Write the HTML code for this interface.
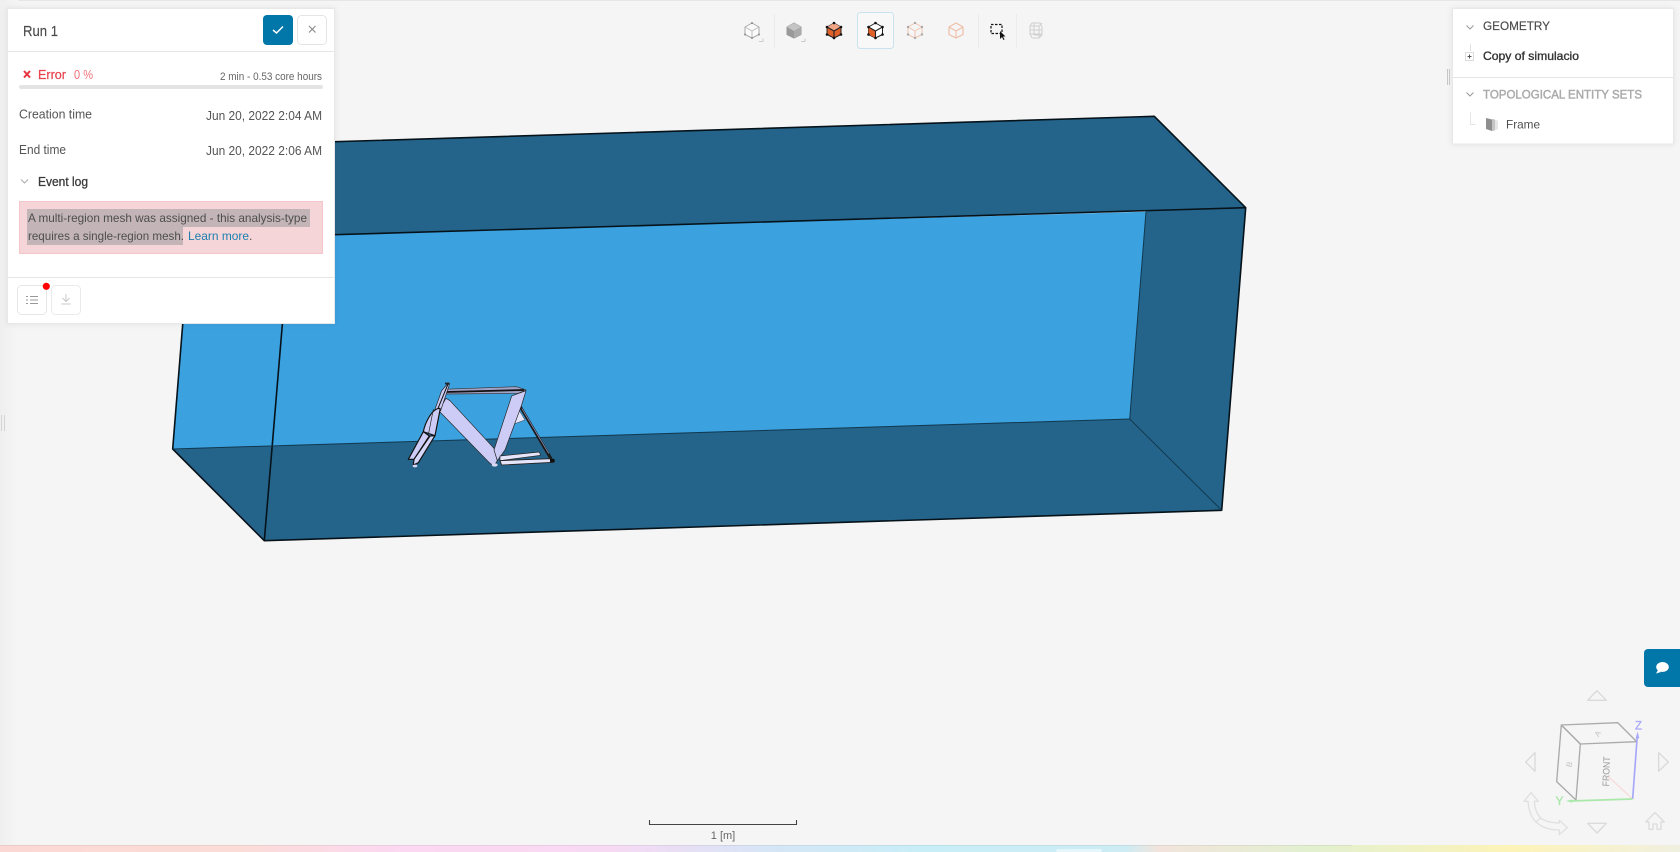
<!DOCTYPE html>
<html>
<head>
<meta charset="utf-8">
<title>Run 1</title>
<style>
html,body{margin:0;padding:0;width:1680px;height:852px;overflow:hidden;background:#f5f5f5;}
svg{display:block;position:absolute;left:0;top:0;}
text{font-family:"Liberation Sans",sans-serif;white-space:pre;}
</style>
</head>
<body>
<svg width="1680" height="852" viewBox="0 0 1680 852" xmlns="http://www.w3.org/2000/svg">
<defs>
<linearGradient id="rb" x1="0" x2="1" y1="0" y2="0">
<stop offset="0" stop-color="#fcd8d4"/>
<stop offset=".14" stop-color="#fbdcd6"/>
<stop offset=".24" stop-color="#fcd8f2"/>
<stop offset=".36" stop-color="#f8d9f3"/>
<stop offset=".46" stop-color="#d5e6f6"/>
<stop offset=".55" stop-color="#c8eef8"/>
<stop offset=".67" stop-color="#cdecf4"/>
<stop offset=".69" stop-color="#f2e4dc"/>
<stop offset=".78" stop-color="#e2f0d0"/>
<stop offset=".9" stop-color="#fdf3b8"/>
<stop offset="1" stop-color="#f0f0e0"/>
</linearGradient>
<linearGradient id="ls" x1="0" x2="1" y1="0" y2="0">
<stop offset="0" stop-color="#efefef"/>
<stop offset="1" stop-color="#f5f5f5"/>
</linearGradient>
<filter id="sh" x="-5%" y="-5%" width="110%" height="110%">
<feDropShadow dx="0" dy="0" stdDeviation="3" flood-color="#000" flood-opacity=".08"/>
</filter>
</defs>

<rect width="1680" height="852" fill="#f5f5f5"/>
<rect width="1680" height="1" fill="#e6e6e6"/>
<rect x="0" y="0" width="18" height="845" fill="url(#ls)"/>

<!-- 3D box -->
<g stroke-linejoin="round">
<polygon points="197,146 1154.3,116.3 1245.7,207.7 289.7,236" fill="#25648a"/>
<polygon points="197,146 289.7,236 264.3,540.7 172.7,449" fill="#3ca1df"/>
<polygon points="280,236 1146,211.7 1129.7,419 172.7,449 197,238" fill="#3ca1df"/>
<polygon points="1245.7,207.7 1221.7,510.3 1129.7,419 1146,211" fill="#25648a"/>
<polygon points="172.7,449 1129.7,419 1221.7,510.3 264.3,540.7" fill="#25648a"/>
<g fill="none" stroke="#06121a" stroke-width="1.600">
<polygon points="197,146 1154.3,116.3 1245.7,207.7 1221.7,510.3 264.3,540.7 172.7,449"/>
<line x1="1245.7" y1="207.7" x2="289.7" y2="236"/>
<line x1="289.7" y1="236" x2="264.3" y2="540.7"/>
</g>
<g fill="none" stroke="#10384f" stroke-width="1">
<line x1="1146" y1="211.7" x2="1129.7" y2="419"/>
<line x1="1129.7" y1="419" x2="172.7" y2="449"/>
<line x1="1129.7" y1="419" x2="1221.7" y2="510.3"/>
</g>
</g>

<!-- Bike frame -->
<g transform="translate(390 370) scale(.3333)" stroke-linejoin="round" stroke-linecap="round">
<polygon points="158,58 380,50 408,60 385,70 165,72" fill="#a2a2c8" stroke="#333" stroke-width="2"/>
<line x1="168" y1="66" x2="400" y2="60" stroke="#111" stroke-width="5"/>
<polygon points="388,122 405,150 372,162" fill="#e4e4fb" stroke="#333" stroke-width="1.500"/>
<line x1="392" y1="112" x2="487" y2="273" stroke="#1a1a1a" stroke-width="9"/>
<line x1="396" y1="116" x2="476" y2="250" stroke="#9a9ac4" stroke-width="2"/>
<polygon points="168,85 180,92 312,235 322,272 312,288 300,280 146,122" fill="#ccccf6" stroke="#222" stroke-width="2"/>
<polygon points="365,78 408,62 395,105 345,240 322,272 312,240" fill="#ccccf6" stroke="#222" stroke-width="2"/>
<polygon points="330,258 448,246 452,256 330,272" fill="#e4e4fb" stroke="#222" stroke-width="2"/>
<polygon points="330,272 480,266 490,277 335,285" fill="#e4e4fb" stroke="#222" stroke-width="2.500"/>
<polygon points="155,62 172,42 178,44 152,122 135,118" fill="#ccccf6" stroke="#222" stroke-width="2"/>
<line x1="174" y1="42" x2="140" y2="125" stroke="#111" stroke-width="3"/>
<path d="M150 115C125 115 105 160 100 185L135 197L150 120Z" fill="#ccccf6" stroke="#111" stroke-width="3.500"/>
<line x1="130" y1="118" x2="115" y2="195" stroke="#222" stroke-width="2"/>
<polygon points="100,185 118,198 72,268 55,268" fill="#ccccf6" stroke="#111" stroke-width="3.500"/>
<polygon points="120,198 135,197 85,278 70,285 72,268" fill="#d6d6f8" stroke="#111" stroke-width="3.500"/>
<ellipse cx="314" cy="285" rx="9" ry="5" fill="#d8d8f0"/>
<ellipse cx="75" cy="288" rx="7" ry="4" fill="#d8d8f0"/>
<rect x="165" y="38" width="14" height="5" fill="#222"/>
<rect x="480" y="267" width="14" height="10" fill="#111"/>
</g>

<!-- Left panel -->
<g filter="url(#sh)"><rect x="7.500" y="8.500" width="327" height="315" fill="#fff" stroke="#e8e8e8" stroke-width="1"/></g>
<text x="23" y="36" font-size="15" fill="#4a4a4a" stroke="#4a4a4a" stroke-width=".15" textLength="35" lengthAdjust="spacingAndGlyphs">Run 1</text>
<rect x="263" y="15" width="30" height="30" rx="4" fill="#0077a8"/>
<path d="M273 30l3.500 3 6.500-6.500" fill="none" stroke="#fff" stroke-width="1.500"/>
<rect x="297.500" y="15.500" width="29" height="29" rx="4" fill="#fff" stroke="#e4e4e4"/>
<path d="M309 26l6.500 6.500M315.500 26l-6.500 6.500" stroke="#888" stroke-width="1.100"/>
<rect x="8" y="51" width="326" height="1" fill="#e6e6e6"/>

<path d="M24 71l6 6.500M30 71l-6 6.500" stroke="#e8323e" stroke-width="2"/>
<text x="38" y="79" font-size="12.500" fill="#e8424d" stroke="#e8424d" stroke-width=".2" textLength="28" lengthAdjust="spacingAndGlyphs">Error</text>
<text x="74" y="79" font-size="12.500" fill="#f0707a" textLength="19" lengthAdjust="spacingAndGlyphs">0 %</text>
<text x="220" y="80" font-size="11" fill="#666" textLength="102" lengthAdjust="spacingAndGlyphs">2 min - 0.53 core hours</text>
<rect x="19" y="85" width="304" height="4" rx="2" fill="#e4e4e4"/>

<text x="19" y="118.500" font-size="12.500" fill="#555" textLength="73" lengthAdjust="spacingAndGlyphs">Creation time</text>
<text x="206" y="120" font-size="12.500" fill="#555" textLength="116" lengthAdjust="spacingAndGlyphs">Jun 20, 2022 2:04 AM</text>
<text x="19" y="154" font-size="12.500" fill="#555" textLength="47" lengthAdjust="spacingAndGlyphs">End time</text>
<text x="206" y="155" font-size="12.500" fill="#555" textLength="116" lengthAdjust="spacingAndGlyphs">Jun 20, 2022 2:06 AM</text>

<path d="M21 179.500l3.500 3.500 3.500-3.500" fill="none" stroke="#aaa" stroke-width="1"/>
<text x="38" y="186" font-size="12.500" fill="#3a3a3a" stroke="#3a3a3a" stroke-width=".3" textLength="50" lengthAdjust="spacingAndGlyphs">Event log</text>

<rect x="19.500" y="201.500" width="303" height="52" fill="#f6d5d8" stroke="#f3c6ca"/>
<rect x="27" y="209" width="283" height="18" fill="#c3b5b7"/>
<rect x="27" y="227" width="156" height="18" fill="#c3b5b7"/>
<text x="28" y="222" font-size="12" fill="#4d4d4d" textLength="279" lengthAdjust="spacingAndGlyphs">A multi-region mesh was assigned - this analysis-type</text>
<text x="28" y="240" font-size="12" fill="#4d4d4d" textLength="156" lengthAdjust="spacingAndGlyphs">requires a single-region mesh.</text>
<text x="188" y="240" font-size="12" fill="#1a7fae" textLength="61" lengthAdjust="spacingAndGlyphs">Learn more</text>
<text x="249" y="240" font-size="12" fill="#4d4d4d">.</text>

<rect x="8" y="277" width="326" height="1" fill="#e6e6e6"/>
<rect x="17.500" y="285.500" width="29" height="29" rx="4" fill="#fff" stroke="#e6e6e6"/>
<path d="M30 296.500h8M30 300h8M30 303.500h8" stroke="#999" stroke-width="1"/>
<path d="M26 296.500h2M26 300h2M26 303.500h2" stroke="#999" stroke-width="1"/>
<circle cx="46.300" cy="286.300" r="3.600" fill="#f00"/>
<rect x="51.500" y="285.500" width="29" height="29" rx="4" fill="#fff" stroke="#eaeaea"/>
<path d="M66 294v7M62.500 298l3.500 3.500 3.500-3.500M61.500 304h9" fill="none" stroke="#c8c8c8" stroke-width="1"/>

<!-- Toolbar -->
<g stroke-linejoin="round">
<rect x="774" y="14" width="1" height="34" fill="#ebebeb"/>
<rect x="978" y="14" width="1" height="34" fill="#ebebeb"/>
<rect x="1016" y="14" width="1" height="34" fill="#ebebeb"/>

<g transform="translate(752 30)">
<polygon points="0,-7 7,-3 7,4.500 0,8 -7,4.500 -7,-3" fill="#fbfbfb" stroke="#aaa" stroke-width="1"/>
<path d="M-7,-3L0,1L7,-3M0,1V8" fill="none" stroke="#bbb" stroke-width=".9"/>
<g fill="#8c8c8c"><circle cx="0" cy="-7" r="1"/><circle cx="7" cy="4.500" r="1"/><circle cx="-7" cy="4.500" r="1"/><circle cx="0" cy="8" r="1"/></g>
</g>
<path d="M759 41.500h4v-3" fill="none" stroke="#ccc"/>

<g transform="translate(794 30)">
<polygon points="0,-7 7,-3 7,4.500 0,8 -7,4.500 -7,-3" fill="#999" stroke="#999" stroke-width="1"/>
<polygon points="0,-7 7,-3 0,1 -7,-3" fill="#c4c4c4"/>
<polygon points="0,1 7,-3 7,4.500 0,8" fill="#aaa"/>
</g>
<path d="M801 41.500h4v-3" fill="none" stroke="#ccc"/>

<g transform="translate(834 30)">
<polygon points="0,-7 7,-3 7,4.500 0,8 -7,4.500 -7,-3" fill="#e0602a" stroke="#222" stroke-width="1"/>
<polygon points="0,-7 7,-3 0,1 -7,-3" fill="#f0a585"/>
<path d="M-7,-3L0,1L7,-3M0,1V8" fill="none" stroke="#222" stroke-width="1.100"/>
<g fill="#111"><circle cx="0" cy="-7" r="1.300"/><circle cx="7" cy="-3" r="1.300"/><circle cx="-7" cy="-3" r="1.300"/><circle cx="7" cy="4.500" r="1.300"/><circle cx="-7" cy="4.500" r="1.300"/><circle cx="0" cy="8" r="1.300"/></g>
</g>

<rect x="857.500" y="12.500" width="36" height="36" rx="3" fill="#f8f8f8" stroke="#c8e3f0"/>
<g transform="translate(875.500 30)">
<polygon points="0,-7 7,-3 7,4.500 0,8 -7,4.500 -7,-3" fill="#fff" stroke="#222" stroke-width="1"/>
<polygon points="-7,-3 0,1 0,8 -7,4.500" fill="#e0602a"/>
<path d="M-7,-3L0,1L7,-3M0,1V8" fill="none" stroke="#222" stroke-width="1.100"/>
<g fill="#111"><circle cx="0" cy="-7" r="1.300"/><circle cx="7" cy="-3" r="1.300"/><circle cx="-7" cy="-3" r="1.300"/><circle cx="7" cy="4.500" r="1.300"/><circle cx="-7" cy="4.500" r="1.300"/><circle cx="0" cy="8" r="1.300"/></g>
</g>

<g transform="translate(915 30)">
<polygon points="0,-7 7,-3 7,4.500 0,8 -7,4.500 -7,-3" fill="none" stroke="#efc4b0" stroke-width="1"/>
<path d="M-7,-3L0,1L7,-3M0,1V8" fill="none" stroke="#efc4b0" stroke-width="1"/>
<g fill="#aaa"><circle cx="0" cy="-7" r="1.200"/><circle cx="7" cy="-3" r="1.200"/><circle cx="-7" cy="-3" r="1.200"/><circle cx="7" cy="4.500" r="1.200"/><circle cx="-7" cy="4.500" r="1.200"/><circle cx="0" cy="8" r="1.200"/></g>
</g>

<g transform="translate(956 30)">
<polygon points="0,-7 7,-3 7,4.500 0,8 -7,4.500 -7,-3" fill="none" stroke="#efbfa8" stroke-width="1.200"/>
<path d="M-7,-3L0,1L7,-3M0,1V8" fill="none" stroke="#efbfa8" stroke-width="1.100"/>
</g>

<rect x="991" y="24.500" width="11" height="9" fill="none" stroke="#111" stroke-width="1.200" stroke-dasharray="2.500 1.500"/>
<path d="M1000 31v8l2-2 1.500 3 1-.5-1.500-3h2.500z" fill="#111"/>

<g transform="translate(1036 30)" fill="none" stroke="#d0d0d0" stroke-width="1">
<polygon points="-4,-7 4,-7 6,-3 6,5 3,8 -4,8 -6,4 -6,-4"/>
<path d="M-6,-4H3V8M3,-4L6,-7M-2,-7V5M-6,0H6M-6,4H6M-2,5H6"/>
</g>
</g>

<!-- Right panel -->
<rect x="1447" y="69" width="1" height="16" fill="#c8c8c8"/>
<rect x="1449" y="69" width="1" height="16" fill="#c8c8c8"/>
<rect x="1" y="415" width="1" height="16" fill="#d4d4d4"/>
<rect x="4" y="415" width="1" height="16" fill="#d4d4d4"/>
<g filter="url(#sh)"><rect x="1452.500" y="8.500" width="221" height="135.500" fill="#fff" stroke="#e8e8e8"/></g>
<path d="M1466.500 25.500l3.500 3.500 3.500-3.500" fill="none" stroke="#999" stroke-width="1"/>
<text x="1483" y="30" font-size="12" fill="#4a4a4a" stroke="#4a4a4a" stroke-width=".15" textLength="67" lengthAdjust="spacingAndGlyphs">GEOMETRY</text>
<path d="M1470.500 44v7" stroke="#e2e2e2"/>
<rect x="1465.500" y="52.500" width="8" height="8" fill="#fff" stroke="#ddd"/>
<path d="M1467.500 56.500h4M1469.500 54.500v4" stroke="#555" stroke-width="1"/>
<text x="1483" y="60" font-size="12" fill="#333" stroke="#333" stroke-width=".35" textLength="96" lengthAdjust="spacingAndGlyphs">Copy of simulacio</text>
<rect x="1453" y="77" width="220" height="1" fill="#e4e4e4"/>
<path d="M1466.500 92.500l3.500 3.500 3.500-3.500" fill="none" stroke="#999" stroke-width="1"/>
<text x="1483" y="98.500" font-size="12" fill="#aaa" stroke="#aaa" stroke-width=".45" textLength="159" lengthAdjust="spacingAndGlyphs">TOPOLOGICAL ENTITY SETS</text>
<path d="M1470.500 112v12.500h5" fill="none" stroke="#e6e6e6"/>
<polygon points="1486,118 1492,119.500 1492,131 1486,129" fill="#8e8e8e"/>
<polygon points="1492,119 1495,119.500 1495,130.500 1492,131" fill="#c4c4c4"/>
<polygon points="1495,120 1498,120.500 1498,129.500 1495,130" fill="#e6e6e6"/>
<text x="1506" y="128.500" font-size="12" fill="#4f4f4f" textLength="34" lengthAdjust="spacingAndGlyphs">Frame</text>

<!-- Chat -->
<path d="M1680 649h-32a4 4 0 0 0-4 4v30a4 4 0 0 0 4 4h32z" fill="#0077a8"/>
<ellipse cx="1662.500" cy="667" rx="6.300" ry="5" fill="#fff"/>
<path d="M1658 670l-2 3.500 5-1.500z" fill="#fff"/>

<!-- View cube -->
<g transform="translate(1500 640) scale(.3333)" fill="none" stroke-linejoin="round">
<polygon points="291,152 263,181 319,181" stroke="#dadada" stroke-width="4"/>
<polygon points="263,550 319,550 291,579" stroke="#dadada" stroke-width="4"/>
<polygon points="105,338 105,394 77,366" stroke="#dadada" stroke-width="4"/>
<polygon points="476,338 476,394 505,366" stroke="#dadada" stroke-width="4"/>
<path d="M465 518l-28 28h10v22h12v-16h12v16h12v-22h10z" stroke="#dcdcdc" stroke-width="4"/>
<path d="M93 458L72 484H84C86 510 92 530 108 546L122 534C110 522 104 505 103 484H115Z" stroke="#e0e0e0" stroke-width="4"/>
<path d="M122 534C135 545 155 548 178 549V541L202 563L178 584V570C150 570 125 562 108 546" stroke="#e0e0e0" stroke-width="4"/>
<polygon points="184,255 353,248 410,305 241,312" stroke="#aaa" stroke-width="4"/>
<polygon points="184,255 241,312 228,480 170,425" stroke="#aaa" stroke-width="4"/>
<line x1="398" y1="477" x2="325" y2="410" stroke="#f8dcdc" stroke-width="4"/>
<line x1="398" y1="477" x2="412" y2="285" stroke="#a8a8fa" stroke-width="5"/>
<polygon points="413,275 407,295 418,295" fill="#a8a8fa"/>
<line x1="398" y1="477" x2="210" y2="483" stroke="#a8e8a8" stroke-width="5"/>
<polygon points="198,483 216,478 216,488" fill="#a8e8a8"/>
</g>
<text x="1638.500" y="729.500" font-size="11.500" fill="#a8a8fa" text-anchor="middle" stroke="#a8a8fa" stroke-width=".3">Z</text>
<text x="1559.500" y="805" font-size="12" fill="#a8e8a8" text-anchor="middle" stroke="#a8e8a8" stroke-width=".3">Y</text>
<text font-size="9.500" fill="#999" text-anchor="middle" transform="translate(1609.500 771.500) rotate(-88)" textLength="30" lengthAdjust="spacingAndGlyphs">FRONT</text>
<text font-size="8" fill="#c4c4c4" text-anchor="middle" transform="translate(1600 735) rotate(-60)">A</text>
<text font-size="8" fill="#c4c4c4" text-anchor="middle" transform="translate(1572 765) rotate(-75)">B</text>

<!-- Scale -->
<path d="M649.500 820v4.500h147v-4.500" fill="none" stroke="#444" stroke-width="1.100"/>
<text x="723" y="839" font-size="11" fill="#666" text-anchor="middle">1 [m]</text>

<!-- Bottom rainbow -->
<rect x="0" y="845" width="1680" height="7" fill="url(#rb)"/>
<rect x="0" y="845" width="1352" height="1" fill="#000" opacity=".06"/>
<rect x="1056" y="849" width="46" height="3" rx="2" fill="#e6f7fb"/>
</svg>
</body>
</html>
